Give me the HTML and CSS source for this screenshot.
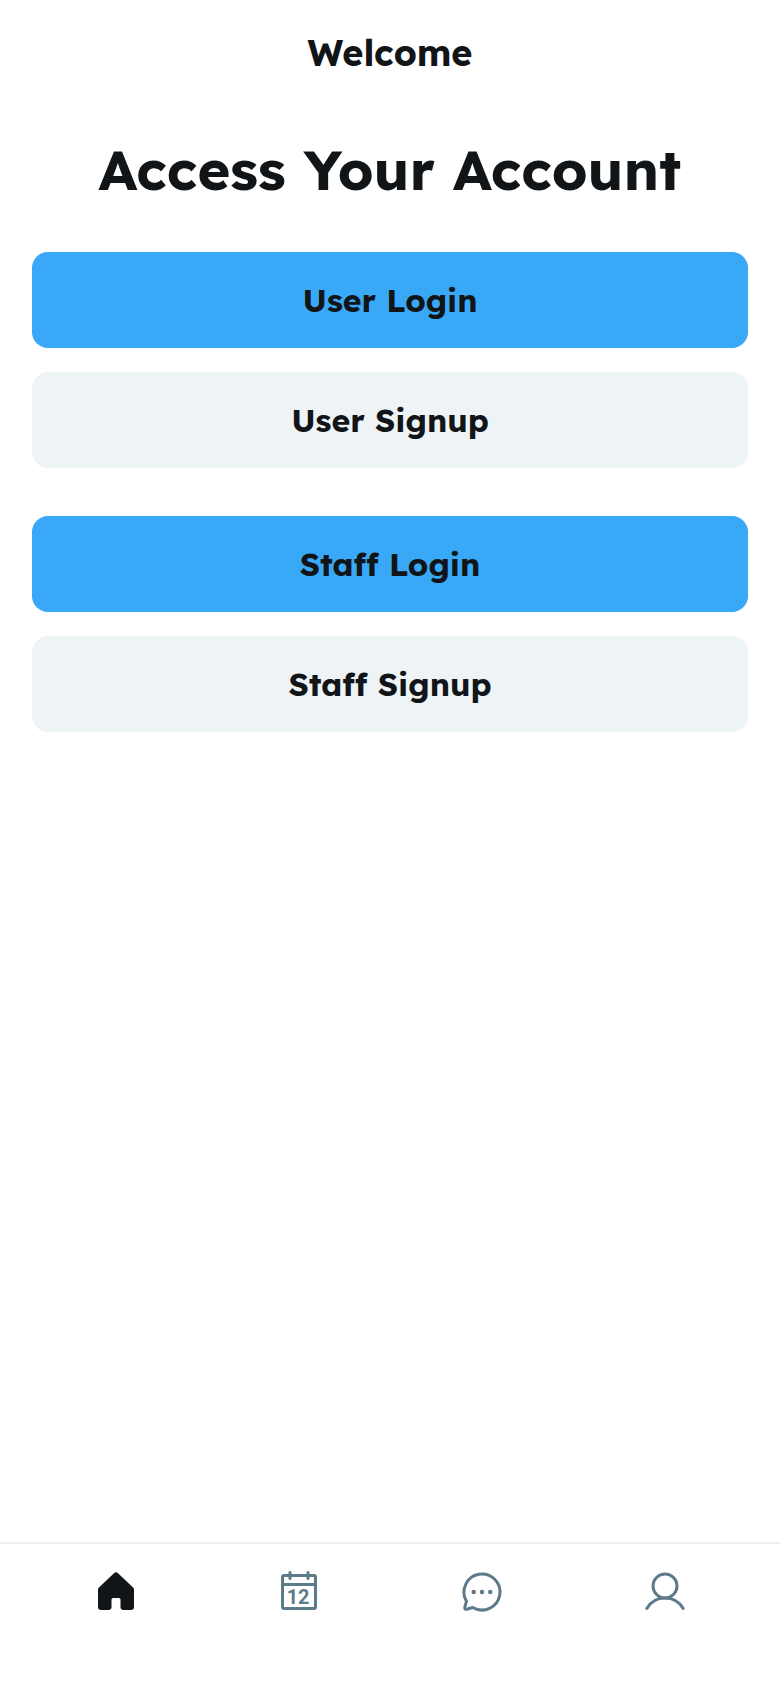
FILE: index.html
```html
<!DOCTYPE html>
<html lang="en">
<head>
<meta charset="utf-8">
<meta name="viewport" content="width=device-width, initial-scale=1">
<title>Welcome</title>
<link rel="stylesheet" href="styles.css">
</head>
<body>
<div class="app">
  <header class="topbar"><h2 class="topbar-title">Welcome</h2></header>
  <main class="content">
    <h1 class="headline">Access Your Account</h1>
    <div class="actions">
      <button class="btn btn-primary" type="button">User Login</button>
      <button class="btn btn-secondary" type="button">User Signup</button>
    </div>
    <div class="actions">
      <button class="btn btn-primary" type="button">Staff Login</button>
      <button class="btn btn-secondary" type="button">Staff Signup</button>
    </div>
  </main>
  <nav class="tabbar" aria-label="Main">
    <a class="tab tab-active" href="#" aria-label="Home">
      <svg class="icon" viewBox="0 0 256 256" fill="currentColor"><path d="M224,115.55V208a16,16,0,0,1-16,16H168a16,16,0,0,1-16-16V168a8,8,0,0,0-8-8H112a8,8,0,0,0-8,8v40a16,16,0,0,1-16,16H48a16,16,0,0,1-16-16V115.55a16,16,0,0,1,5.17-11.78l80-75.48.11-.11a16,16,0,0,1,21.53,0l.11.11,80,75.48A16,16,0,0,1,224,115.55Z"/></svg>
    </a>
    <a class="tab" href="#" aria-label="Calendar">
      <svg class="icon icon-line" viewBox="0 0 256 256"><rect x="40" y="40" width="176" height="176" rx="8"/><path d="M176,24V56M80,24V56M40,88H216"/><text class="icon-day" x="123" y="190" text-anchor="middle">12</text></svg>
    </a>
    <a class="tab" href="#" aria-label="Messages">
      <svg class="icon icon-line" viewBox="0 0 256 256"><path d="M45.4,177A95.9,95.9,0,1,1,79,210.6h0L45.8,220a7.9,7.9,0,0,1-9.8-9.8L45.4,177Z"/><g class="icon-dots"><circle cx="84" cy="128" r="12"/><circle cx="128" cy="128" r="12"/><circle cx="172" cy="128" r="12"/></g></svg>
    </a>
    <a class="tab" href="#" aria-label="Profile">
      <svg class="icon icon-line" viewBox="0 0 256 256"><circle cx="128" cy="96" r="64"/><path d="M31,216a112,112,0,0,1,194,0"/></svg>
    </a>
  </nav>
</div>
</body>
</html>
```

FILE: styles.css
```css
* { box-sizing: border-box; }

body {
  margin: 0;
  background: #fff;
  color: #111518;
  font-family: Lexend, Inter, "Noto Sans", sans-serif;
}

.app {
  display: flex;
  flex-direction: column;
  min-height: 100vh;
}

.topbar {
  display: flex;
  justify-content: center;
  align-items: center;
  min-height: 112px;
  padding: 8px 32px 14px;
}

.topbar-title {
  margin: 0;
  font-size: 36px;
  line-height: 44px;
  font-weight: 700;
}

.content {
  flex: 1;
  display: flex;
  flex-direction: column;
  gap: 48px;
  padding: 22px 32px;
}

.headline {
  margin: 0;
  font-size: 56px;
  line-height: 70px;
  font-weight: 700;
  text-align: center;
}

.actions {
  display: flex;
  flex-direction: column;
  gap: 24px;
}

.btn {
  width: 100%;
  height: 96px;
  padding: 0 40px;
  border: 0;
  border-radius: 16px;
  color: inherit;
  font: inherit;
  font-size: 32px;
  line-height: 48px;
  font-weight: 700;
  cursor: pointer;
}

.btn-primary { background: #39a8f6; }
.btn-secondary { background: #eef3f6; }

.tabbar {
  display: flex;
  gap: 16px;
  padding: 16px 32px 64px;
  border-top: 2px solid #eaeff3;
}

.tab {
  flex: 1;
  display: flex;
  justify-content: center;
  align-items: center;
  height: 64px;
  color: #5d7a8b;
}

.tab-active { color: #111518; }

.icon {
  display: block;
  width: 48px;
  height: 48px;
}

.icon-line {
  fill: none;
  stroke: currentColor;
  stroke-width: 16;
  stroke-linecap: round;
  stroke-linejoin: round;
}

.icon-dots,
.icon-day {
  fill: currentColor;
  stroke: none;
}

.icon-day {
  font-family: Roboto, sans-serif;
  font-size: 106px;
  font-weight: 700;
}
```
